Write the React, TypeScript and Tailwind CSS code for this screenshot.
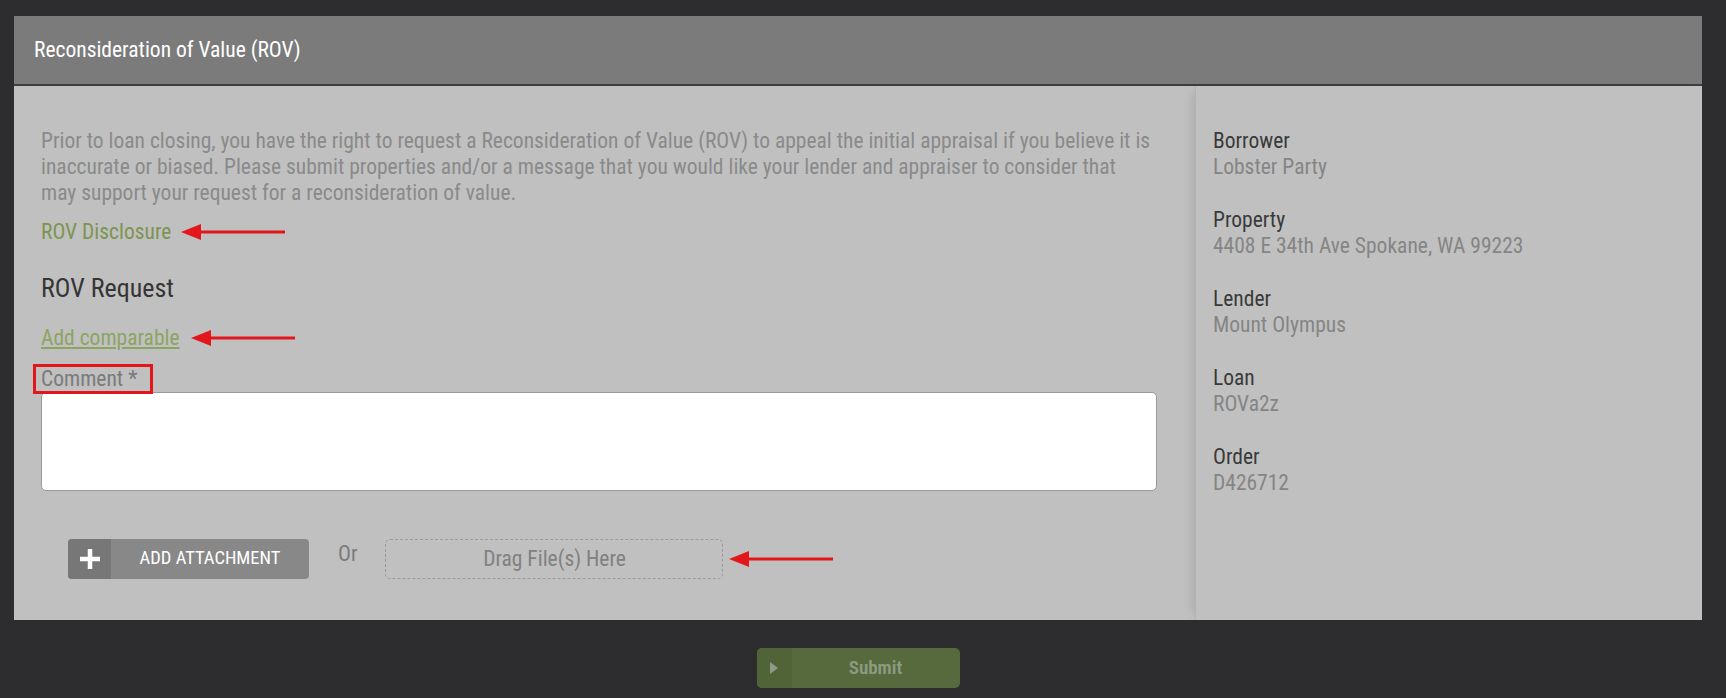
import React from 'react';

const font = "font-['Roboto_Condensed',Roboto,'Liberation_Sans',sans-serif] [font-stretch:condensed]";

const Arrow: React.FC<{ className?: string }> = ({ className }) => (
  <svg width="104" height="18" viewBox="0 0 104 18" className={className}>
    <line x1="16" y1="9" x2="104" y2="9" stroke="#e3161c" strokeWidth="3" />
    <polygon points="0,9 20,1 20,17" fill="#e3161c" />
  </svg>
);

const info = [
  { label: 'Borrower', value: 'Lobster Party' },
  { label: 'Property', value: '4408 E 34th Ave Spokane, WA 99223' },
  { label: 'Lender', value: 'Mount Olympus' },
  { label: 'Loan', value: 'ROVa2z' },
  { label: 'Order', value: 'D426712' },
];

const App: React.FC = () => {
  return (
    <div className={`min-h-screen w-full bg-[#2d2d2f] pt-[16px] pl-[14px] pr-[24px] ${font}`}>
      <div className="bg-[#c0c0c0]">
        <div className="h-[70px] bg-[#7b7b7b] border-b-2 border-[#3d3d3d] flex items-center px-[20px]">
          <h1 className="text-[21.5px] text-white">Reconsideration of Value (ROV)</h1>
        </div>

        <div className="flex">
          <div className="w-[1181px] shrink-0 pl-[27px] pr-[38px] pt-[42px] pb-[41px]">
            <p className="text-[21.5px] leading-[26px] text-[#8a8a8a]">
              Prior to loan closing, you have the right to request a Reconsideration of Value (ROV) to appeal the initial appraisal if you believe it is
              <br />
              inaccurate or biased. Please submit properties and/or a message that you would like your lender and appraiser to consider that
              <br />
              may support your request for a reconsideration of value.
            </p>

            <div className="mt-[13px] flex items-center h-[26px]">
              <a className="text-[21.5px] leading-[26px] text-[#7d9450] cursor-pointer">ROV Disclosure</a>
              <Arrow className="ml-[10px]" />
            </div>

            <h2 className="mt-[27px] text-[26px] leading-[32px] text-[#353535]">ROV Request</h2>

            <div className="mt-[21px] flex items-center h-[26px]">
              <a className="text-[21.5px] leading-[26px] text-[#8da462] underline underline-offset-2 cursor-pointer">Add comparable</a>
              <Arrow className="ml-[11px]" />
            </div>

            <div className="mt-[13px]">
              <span className="inline-block w-[120px] -ml-[8px] border-[3px] border-[#e3161c] pl-[5px] text-[21.5px] leading-[24px] text-[#7a7a7a]">
                Comment *
              </span>
            </div>
            <textarea className="block w-full h-[99px] -mt-[2px] bg-white border border-[#9a9a9a] rounded-[5px] resize-none outline-none" />

            <div className="mt-[48px] ml-[27px] flex items-center">
              <button className="flex h-[40px] w-[241px] rounded-[4px] overflow-hidden bg-[#888888]">
                <span className="w-[43px] h-full bg-[#777777] flex items-center justify-center">
                  <svg width="20" height="20" viewBox="0 0 20 20">
                    <rect x="7.75" y="0" width="4.5" height="20" fill="#fff" />
                    <rect x="0" y="7.75" width="20" height="4.5" fill="#fff" />
                  </svg>
                </span>
                <span className="flex-1 flex items-center justify-center text-[18.5px] text-white">ADD ATTACHMENT</span>
              </button>
              <span className="ml-[29px] -mt-[10px] text-[21.5px] text-[#7a7a7a]">Or</span>
              <div className="ml-[28px] h-[40px] w-[338px] border border-dashed border-[#9a9a9a] rounded-[5px] flex items-center justify-center text-[21.5px] text-[#818181]">
                Drag File(s) Here
              </div>
              <Arrow className="ml-[6px]" />
            </div>
          </div>

          <div className="flex-1 border-l border-[#b3b3b3] shadow-[-8px_0_10px_-6px_rgba(0,0,0,0.12)] pl-[17px] pt-[42px]">
            <div className="flex flex-col gap-[27px]">
              {info.map((i) => (
                <div key={i.label} className="text-[21.5px] leading-[26px]">
                  <div className="text-[#3a3a3a]">{i.label}</div>
                  <div className="text-[#858585]">{i.value}</div>
                </div>
              ))}
            </div>
          </div>
        </div>
      </div>

      <div className="flex justify-center pt-[28px] pb-[12px]">
        <button className="flex h-[40px] w-[203px] rounded-[5px] overflow-hidden bg-[#566a3d]">
          <span className="w-[35px] h-full bg-[#516438] flex items-center justify-center">
            <svg width="8" height="12" viewBox="0 0 8 12">
              <polygon points="0,0 8,6 0,12" fill="#8f9a86" />
            </svg>
          </span>
          <span className="flex-1 flex items-center justify-center text-[19px] font-semibold text-[#8e9b82]">Submit</span>
        </button>
      </div>
    </div>
  );
};

export default App;
